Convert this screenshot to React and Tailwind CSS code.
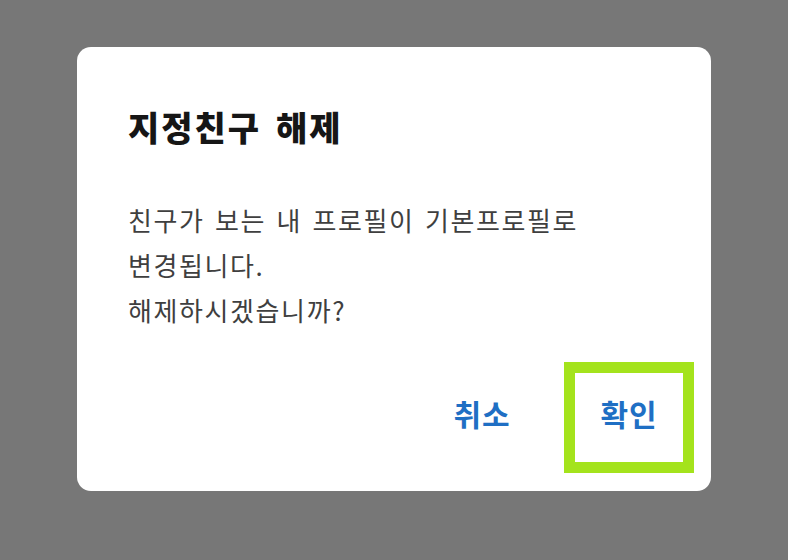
import React from "react";

const font = { fontFamily: '"Noto Sans CJK KR", "Noto Sans", sans-serif' };

export default function App() {
  return (
    <div
      className="w-[788px] h-[560px] bg-[#777777] pt-[47px] pl-[77px]"
      style={font}
    >
      <div className="w-[634px] h-[444px] bg-white rounded-[14px] flex flex-col pt-[60px] pl-[51px] pr-[17px]">
        <h1 className="text-[34px] leading-[40px] font-black text-[#161616] tracking-[2px] [word-spacing:5px]">
          지정친구 해제
        </h1>

        <p className="mt-[50px] text-[26px] leading-[45px] text-[#3f3f3f] tracking-[1.6px] [word-spacing:3px]">
          친구가 보는 내 프로필이 기본프로필로
          <br />
          변경됩니다.
          <br />
          해제하시겠습니까?
        </p>

        <div className="mt-[30px] flex justify-end gap-[17px]">
          <button className="w-[130px] h-[111px] flex items-center justify-center pb-[8px] text-[30px] font-bold text-[#1f6fc4] tracking-[1px]">
            취소
          </button>
          <button className="w-[130px] h-[111px] flex items-center justify-center pb-[8px] border-[11px] border-[#a4e31c] text-[30px] font-bold text-[#1f6fc4] tracking-[1px]">
            확인
          </button>
        </div>
      </div>
    </div>
  );
}
